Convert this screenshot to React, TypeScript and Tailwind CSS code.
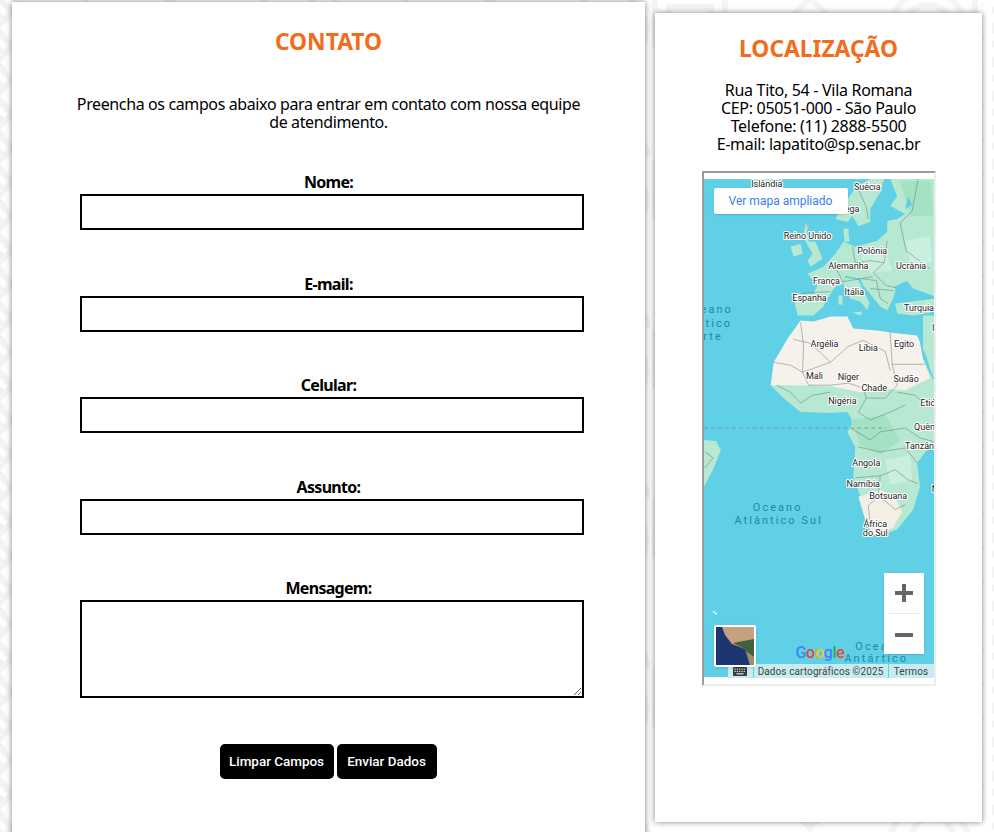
const labels: [string, number, number][] = [
  ['Islândia', 766, 186],
  ['Suécia', 867, 189],
  ['Noruega', 842, 211],
  ['Reino Unido', 807, 238],
  ['Polônia', 872, 253],
  ['Alemanha', 848, 268],
  ['Ucrânia', 911, 268],
  ['França', 826, 283],
  ['Itália', 854, 294],
  ['Espanha', 809, 300],
  ['Turquia', 919, 310],
  ['Irã', 937, 331],
  ['Argélia', 824, 347],
  ['Líbia', 868, 351],
  ['Egito', 904, 347],
  ['Mali', 814, 379],
  ['Níger', 848, 380],
  ['Sudão', 906, 382],
  ['Chade', 874, 391],
  ['Nigéria', 842, 404],
  ['Etiópia', 934, 406],
  ['Quênia', 928, 430],
  ['Tanzânia', 923, 449],
  ['Angola', 866, 466],
  ['Namíbia', 863, 487],
  ['Botsuana', 888, 499],
  ['África', 875, 527],
  ['do Sul', 875, 536],
  ['Moçambique', 958, 492],
];

const oceanLabels: [string, number, number][] = [
  ['Oceano', 707, 313],
  ['Atlântico', 700, 327],
  ['Norte', 703, 340],
  ['Oceano', 777, 511],
  ['Atlântico Sul', 778, 524],
  ['Oceano', 880, 651],
  ['Antártico', 876, 663],
];

const borders = [
  'M793 339 L810 343 L830 362 L848 346 L863 340 L885 351 L890 370',
  'M800 322 L803 345 L802 372 L830 362',
  'M773 362 L790 365 L802 372 L808 385 L830 385 L848 383 L863 388 L866 398',
  'M890 332 L892 364 L925 364',
  'M776 385 L790 392 L800 403 L812 395 L830 392',
  'M892 364 L897 385 L885 398 L866 398 L858 412 L870 420 L890 412 L905 405',
  'M897 392 L915 395 L925 405',
  'M850 428 L870 440 L880 432 L905 428 L920 438 L935 442',
  'M858 447 L880 452 L905 448 L917 463',
  'M855 478 L880 476 L895 470 L908 480 L918 484',
  'M880 476 L878 497 L868 506 L870 525',
  'M880 497 L895 510 L905 505',
  'M887 240 L884 262 L873 272 L886 285 L896 287',
  'M852 246 L855 262 L870 260 L884 262',
  'M830 262 L838 272 L842 281 L855 279 L872 276',
  'M800 293 L830 291',
  'M900 222 L906 250 L930 268',
  'M918 178 L912 210 L900 222',
  'M862 278 L876 280 L880 298 L888 303',
  'M870 288 L893 290',
  'M857 186 L866 206 L868 218',
  'M704 452 L712 458 L704 468',
];

// Carte dessinée à la main : les coordonnées sont celles de la capture
const MapDrawing = () => (
  <svg viewBox="703 178 231 500" className="block h-full w-full">
    <rect x="703" y="178" width="231" height="500" fill="#5fd0e6" />
    <g fill="#b7e8d2">
      <path d="M752 178 L782 178 L778 185 L760 186 Z" />
      {/* Scandinavie */}
      <path d="M835 218 L847 198 L857 185 L870 178 L884 178 L880 191 L870 208 L870 221 L858 225 L852 215 L847 221 Z" />
      <path d="M843 228 L848 228 L849 241 L844 241 Z" />
      {/* Finlande, Russie et Europe de l'Est */}
      <path d="M890 178 L936 178 L936 296 L913 288 L907 280 L895 286 L895 291 L893 298 L887 310 L880 306 L863 285 L860 278 L845 275 L843 283 L835 286 L827 298 L823 306 L813 315 L797 315 L793 298 L790 293 L813 293 L817 285 L807 273 L823 266 L835 253 L843 241 L855 246 L877 240 L887 231 L887 220 L897 218 L905 213 L890 205 L897 195 Z" />
      {/* Italie */}
      <path d="M845 277 L858 279 L862 288 L869 302 L867 310 L860 301 L850 298 L843 285 Z" />
      <path d="M838 295 L842 295 L842 304 L838 304 Z" />
      <path d="M852 312 L862 311 L860 315 Z" />
      {/* Royaume-Uni et Irlande */}
      <path d="M805 222 L808 241 L815 241 L822 258 L810 266 L807 260 L812 253 L808 246 L803 236 Z" />
      <path d="M790 246 L800 243 L802 253 L793 256 Z" />
      {/* Turquie */}
      <path d="M895 303 L920 300 L936 298 L936 311 L913 315 L897 313 Z" />
      {/* Afrique */}
      <path d="M770 385 L783 398 L800 412 L830 413 L847 412 L853 422 L847 432 L855 447 L853 477 L860 497 L867 527 L877 537 L897 530 L913 510 L920 487 L917 463 L935 440 L935 382 L923 358 L920 342 Z" />
      <path d="M923 315 L934 315 L934 378 L923 352 Z" />
      <path d="M703 440 L715 441 L720 450 L712 470 L703 487 Z" />
    </g>
    <g fill="#a4e2c4">
      <path d="M900 180 L930 180 L934 215 L910 215 Z" />
      <path d="M850 420 L885 415 L900 440 L880 455 L860 445 Z" />
    </g>
    <g fill="#c9f0de">
      <path d="M860 255 L885 250 L892 270 L870 272 Z" />
      <path d="M905 240 L930 235 L932 262 L910 262 Z" />
      <path d="M885 460 L910 455 L912 480 L890 485 Z" />
    </g>
    <path d="M805 222 L808 228 L804 230 Z" fill="#d8cfc4" />
    <path
      d="M800 320 L813 321 L830 316 L847 316 L853 328 L877 330 L890 332 L917 335 L920 342 L923 358 L930 378 L905 390 L880 388 L860 392 L830 386 L800 385 L770 385 L773 362 L787 338 Z"
      fill="#f6f1ea"
    />
    <path
      d="M858 497 L880 490 L895 498 L902 512 L893 528 L877 537 L867 527 Z"
      fill="#f3efe4"
    />
    <path d="M920 342 L923 358 L933 380 L927 358 Z" fill="#5fd0e6" />
    <path d="M908 195 L912 204 L905 208 Z" fill="#5fd0e6" />
    <g fill="none" stroke="#5b6a66" strokeWidth="0.45">
      {borders.map((d) => (
        <path key={d} d={d} />
      ))}
    </g>
    <line x1="703" y1="428" x2="886" y2="428" stroke="#7f9aa3" strokeWidth="1" strokeDasharray="4 3" />
    <path d="M712 612 L716 615" stroke="#fff" strokeWidth="1.2" />
    <g
      className="font-['Roboto',sans-serif]"
      fontSize="9"
      textAnchor="middle"
      fill="#222222"
      stroke="#ffffff"
      strokeWidth="2.2"
      paintOrder="stroke"
      strokeLinejoin="round"
    >
      {labels.map(([name, x, y]) => (
        <text key={name + x} x={x} y={y}>
          {name}
        </text>
      ))}
    </g>
    <g
      className="font-['Roboto',sans-serif]"
      fontSize="11"
      letterSpacing="2.1"
      textAnchor="middle"
      fill="#1d8aa6"
    >
      {oceanLabels.map(([name, x, y]) => (
        <text key={name + y} x={x} y={y}>
          {name}
        </text>
      ))}
    </g>
  </svg>
);

const SatelliteThumb = () => (
  <svg viewBox="0 0 38 38" className="block h-full w-full">
    <rect width="38" height="38" fill="#1d3570" />
    <path d="M6 0 H38 V38 H34 L29 22 L16 17 L9 8 Z" fill="#c4a27f" />
    <path d="M17 16 L38 12 V38 H34 L29 22 Z" fill="#41603c" />
    <path d="M30 24 L34 38 H38 V30 Z" fill="#9b8f6d" />
  </svg>
);

const KeyboardIcon = () => (
  <svg viewBox="0 0 14 9" className="h-[9px] w-[14px]">
    <rect width="14" height="9" rx="1" fill="#3c3c3c" />
    <g fill="#c8ebf2">
      <rect x="1.5" y="1.5" width="1.2" height="1.2" />
      <rect x="3.8" y="1.5" width="1.2" height="1.2" />
      <rect x="6.1" y="1.5" width="1.2" height="1.2" />
      <rect x="8.4" y="1.5" width="1.2" height="1.2" />
      <rect x="10.7" y="1.5" width="1.2" height="1.2" />
      <rect x="1.5" y="3.8" width="1.2" height="1.2" />
      <rect x="3.8" y="3.8" width="1.2" height="1.2" />
      <rect x="6.1" y="3.8" width="1.2" height="1.2" />
      <rect x="8.4" y="3.8" width="1.2" height="1.2" />
      <rect x="10.7" y="3.8" width="1.2" height="1.2" />
      <rect x="3.5" y="6.2" width="7" height="1.2" />
    </g>
  </svg>
);

const EmbeddedMap = () => (
  <div className="mx-auto h-[515px] w-[234px] border-2 border-t-[#9b9b9b] border-r-[#eeeeee] border-b-[#eeeeee] border-l-[#9b9b9b] bg-white pt-[5px] pb-[6px]">
    <div className="relative h-[500px] w-full overflow-hidden">
      <MapDrawing />
      <div className="absolute top-[10px] left-[10px] flex h-[26px] w-[134px] items-center justify-center rounded-[2px] bg-white font-['Roboto',sans-serif] text-[12px] text-[#3b7ded] shadow-sm">
        Ver mapa ampliado
      </div>
      <div className="absolute top-[395px] right-[10px] flex h-[81px] w-[40px] flex-col items-center bg-white shadow-sm">
        <svg viewBox="0 0 18 18" className="mt-[11px] h-[18px] w-[18px]">
          <path d="M7 0 H11 V7 H18 V11 H11 V18 H7 V11 H0 V7 H7 Z" fill="#666666" />
        </svg>
        <div className="mt-[11px] h-px w-[30px] bg-[#e6e6e6]" />
        <div className="mt-[19px] h-[4px] w-[18px] bg-[#666666]" />
      </div>
      <div className="absolute top-[465px] left-[92px] font-['Roboto',sans-serif] text-[16px] leading-[20px] font-medium tracking-[-0.3px]">
        <span className="text-[#4285f4]">G</span>
        <span className="text-[#ea4335]">o</span>
        <span className="text-[#fbbc05]">o</span>
        <span className="text-[#4285f4]">g</span>
        <span className="text-[#34a853]">l</span>
        <span className="text-[#ea4335]">e</span>
      </div>
      <div className="absolute right-0 bottom-0 flex h-[14px] w-[206px] items-center bg-[#c8ebf2] font-['Roboto',sans-serif] text-[10px] tracking-[0.1px] whitespace-nowrap text-[#444444]">
        <div className="flex h-full w-[26px] items-center justify-center border-r border-[#5fd0e6]">
          <KeyboardIcon />
        </div>
        <div className="flex h-full w-[135px] items-center justify-center border-r border-[#5fd0e6]">
          Dados cartográficos ©2025
        </div>
        <div className="flex-1 text-center">Termos</div>
      </div>
      <div className="absolute top-[447px] left-[10px] h-[42px] w-[42px] overflow-hidden rounded-[2px] border-2 border-white shadow-sm">
        <SatelliteThumb />
      </div>
    </div>
  </div>
);

const PageBackground = () => (
  <svg className="absolute inset-0 h-full w-full" aria-hidden="true">
    <defs>
      <pattern id="motif" x="650" y="-12" width="320" height="170" patternUnits="userSpaceOnUse">
        <g fill="none" stroke="#f5f5f5" strokeWidth="6">
          <path d="M5 60 V5 H75 V60 M19 60 V19 H61 V60 M33 60 V33 H47 V60" />
          <path d="M85 85 L160 10 L235 85 L160 160 Z M105 85 L160 30 L215 85 L160 140 Z M125 85 L160 50 L195 85 L160 120 Z" />
          <circle cx="278" cy="42" r="38" />
          <circle cx="278" cy="42" r="25" />
          <circle cx="278" cy="42" r="12" />
          <path d="M240 170 C255 120 300 120 320 170 M260 170 C270 140 295 140 305 170" />
        </g>
      </pattern>
      <pattern id="chevrons" x="-8" y="0" width="40" height="34" patternUnits="userSpaceOnUse">
        <path d="M0 -8 L20 12 L0 32 M0 8 L12 20 M0 -24 L30 6 M0 24 L14 38" fill="none" stroke="#f3f3f3" strokeWidth="6" />
      </pattern>
    </defs>
    <rect width="100%" height="100%" fill="#ffffff" />
    <rect width="100%" height="100%" fill="url(#motif)" />
    <rect width="12" height="100%" fill="#ffffff" />
    <rect width="12" height="100%" fill="url(#chevrons)" />
    <rect x="982" width="12" height="100%" fill="#ffffff" />
    <rect x="982" width="12" height="100%" fill="url(#chevrons)" />
  </svg>
);

const Field = ({ label }: { label: string }) => (
  <div className="flex flex-col items-center">
    <label className="mb-[3px] h-[18px] text-[16px] leading-[18px] font-bold tracking-[-0.7px] text-black">
      {label}
    </label>
    <input
      type="text"
      className="ml-[6px] h-[36px] w-[504px] border-2 border-black bg-white"
    />
  </div>
);

export default function App() {
  return (
    <div className="relative h-[832px] w-[994px] overflow-hidden font-['Noto_Sans',sans-serif] text-black">
      <PageBackground />
      <div className="relative flex items-start pl-[12px]">
        {/* Formulaire de contact */}
        <section className="mt-[2px] h-[860px] w-[633px] bg-white pt-[27px] shadow-[0_0_6px_rgba(0,0,0,0.5)]">
          <h2 className="text-center text-[22.8px] leading-[26px] font-bold text-[#f26c1b]">
            CONTATO
          </h2>
          <p className="mx-auto mt-[40px] w-[510px] text-center text-[16px] leading-[18px] tracking-[-0.38px]">
            Preencha os campos abaixo para entrar em contato com nossa equipe de atendimento.
          </p>
          <form className="mt-[42px] flex flex-col gap-[44.6px]">
            <Field label="Nome:" />
            <Field label="E-mail:" />
            <Field label="Celular:" />
            <Field label="Assunto:" />
            <div className="flex flex-col items-center">
              <label className="mb-[3px] h-[18px] text-[16px] leading-[18px] font-bold tracking-[-0.7px]">
                Mensagem:
              </label>
              <textarea className="ml-[6px] block h-[98px] w-[504px] border-2 border-black bg-white" />
            </div>
          </form>
          <div className="mt-[46px] flex justify-center gap-[3px] pr-[1px]">
            <button
              type="button"
              className="h-[35px] w-[114px] rounded-[5px] bg-black font-['Roboto',sans-serif] text-[13.45px] font-medium text-white"
            >
              Limpar Campos
            </button>
            <button
              type="button"
              className="h-[35px] w-[100px] rounded-[5px] bg-black font-['Roboto',sans-serif] text-[13.45px] font-medium text-white"
            >
              Enviar Dados
            </button>
          </div>
        </section>

        {/* Localisation */}
        <section className="mt-[13px] ml-[10px] h-[809px] w-[327px] bg-white pt-[23px] shadow-[0_0_6px_rgba(0,0,0,0.5)]">
          <h2 className="text-center text-[22.8px] leading-[26px] font-bold text-[#f26c1b]">
            LOCALIZAÇÃO
          </h2>
          <div className="mt-[19px] text-center text-[16px] leading-[18px] tracking-[-0.3px]">
            <p>Rua Tito, 54 - Vila Romana</p>
            <p>CEP: 05051-000 - São Paulo</p>
            <p>Telefone: (11) 2888-5500</p>
            <p>E-mail: lapatito@sp.senac.br</p>
          </div>
          <div className="mt-[18px]">
            <EmbeddedMap />
          </div>
        </section>
      </div>
    </div>
  );
}
